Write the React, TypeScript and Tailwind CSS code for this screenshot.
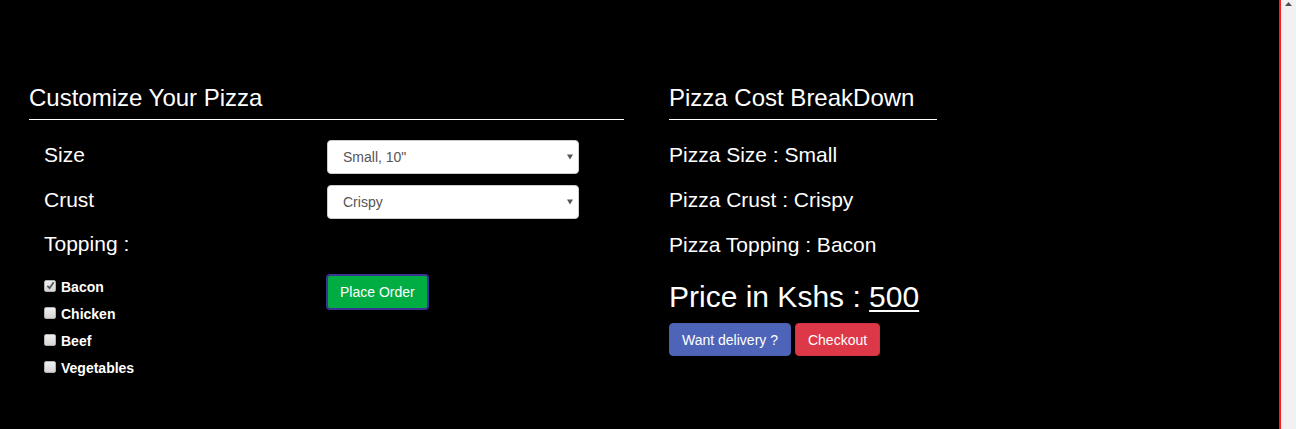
import React from "react";

function SelectBox({ value }: { value: string }) {
  return (
    <div className="relative h-[34px] w-[252px]">
      <select
        defaultValue={value}
        className="h-full w-full appearance-none rounded-[4px] border border-[#cccccc] bg-white pl-[15px] pr-[20px] text-[14px] text-[#555555] outline-none font-['Liberation_Sans',Arial,sans-serif]"
      >
        <option>{value}</option>
      </select>
      <svg
        className="pointer-events-none absolute right-[6px] top-[14px]"
        width="6"
        height="6"
        viewBox="0 0 6 6"
      >
        <path d="M0 0.5 L6 0.5 L3 5.5 Z" fill="#555555" />
      </svg>
    </div>
  );
}

function Check({ label, checked }: { label: string; checked?: boolean }) {
  return (
    <label className="flex h-[27px] items-center text-[14px] font-bold">
      <span className="mb-[4px] mr-[5px] flex h-[12px] w-[12px] items-center justify-center rounded-[2px] border border-[#b0b0b0] bg-gradient-to-b from-[#f0f0f0] to-[#d6d6d6]">
        {checked && (
          <svg width="9" height="9" viewBox="0 0 10 10">
            <path d="M1.5 5.5 L4 8 L8.5 1.5" stroke="#555555" strokeWidth="2" fill="none" />
          </svg>
        )}
      </span>
      {label}
    </label>
  );
}

export default function App() {
  return (
    <div className="flex h-[429px] w-full overflow-hidden bg-black font-['Liberation_Sans',Arial,sans-serif] text-white">
      <main className="flex flex-1 pl-[29px] pt-[83px]">
        <section className="w-[595px]">
          <h2 className="border-b border-white pb-[7px] text-[24px] leading-[29px]">
            Customize Your Pizza
          </h2>
          <div className="mt-[20px] pl-[15px]">
            <div className="flex flex-col gap-[11px]">
              <div className="flex items-center">
                <div className="w-[283px] pb-[4px] text-[21px] leading-[24px]">Size</div>
                <SelectBox value={'Small, 10"'} />
              </div>
              <div className="flex items-center">
                <div className="w-[283px] pb-[4px] text-[21px] leading-[24px]">Crust</div>
                <SelectBox value="Crispy" />
              </div>
            </div>
            <div className="mt-[11px] h-[28px] text-[21px] leading-[28px]">Topping :</div>
            <div className="mt-[16px] flex items-start">
              <div className="flex w-[282px] flex-col">
                <Check label="Bacon" checked />
                <Check label="Chicken" />
                <Check label="Beef" />
                <Check label="Vegetables" />
              </div>
              <button className="h-[36px] rounded-[4px] border-2 border-[#3b3592] bg-[#00ad43] px-[12px] text-[14px] leading-[20px] text-white">
                Place Order
              </button>
            </div>
          </div>
        </section>
        <section className="ml-[45px] w-[268px]">
          <h2 className="border-b border-white pb-[7px] text-[24px] leading-[29px]">
            Pizza Cost BreakDown
          </h2>
          <p className="mt-[23px] text-[21px] leading-[24px]">Pizza Size : Small</p>
          <p className="mt-[21px] text-[21px] leading-[24px]">Pizza Crust : Crispy</p>
          <p className="mt-[21px] text-[21px] leading-[24px]">Pizza Topping : Bacon</p>
          <p className="mt-[22px] text-[30px] leading-[36px]">
            Price in Kshs : <span className="underline decoration-2 underline-offset-[3px]">500</span>
          </p>
          <div className="mt-[8px] flex gap-[4px]">
            <button className="h-[33px] rounded-[4px] border border-[#4a5fb0] bg-[#4e64b8] px-[12px] text-[14px] leading-[20px] text-white">
              Want delivery ?
            </button>
            <button className="h-[33px] rounded-[4px] border border-[#d43343] bg-[#dc3848] px-[12px] text-[14px] leading-[20px] text-white">
              Checkout
            </button>
          </div>
        </section>
      </main>
      <div className="w-[2px] bg-[#ff1a1a]" />
      <div className="flex w-[15px] justify-center bg-[#f1f1f1] pt-[2px]">
        <svg width="7" height="4" viewBox="0 0 7 4">
          <path d="M3.5 0 L7 4 L0 4 Z" fill="#505050" />
        </svg>
      </div>
    </div>
  );
}
